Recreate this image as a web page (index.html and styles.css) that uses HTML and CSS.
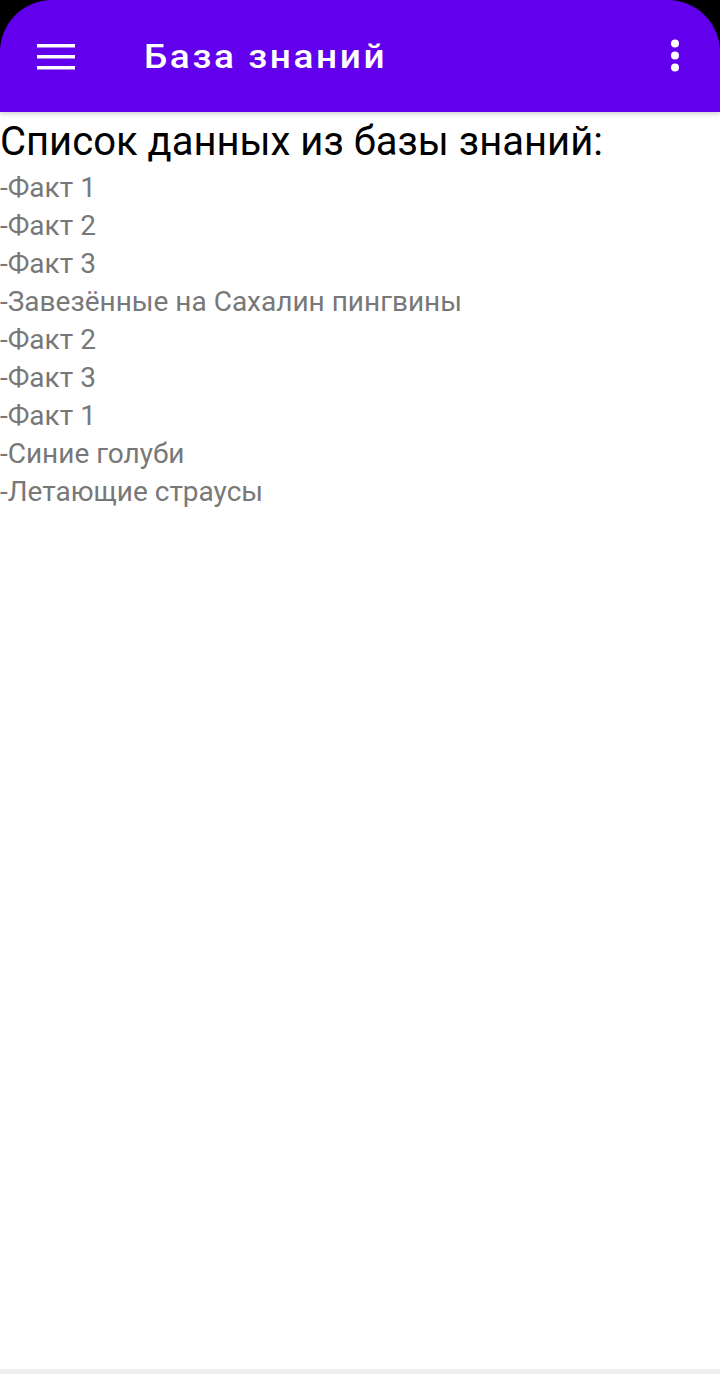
FILE: index.html
```html
<!DOCTYPE html>
<html lang="ru">
<head>
<meta charset="utf-8">
<link rel="stylesheet" href="styles.css">
</head>
<body>
<div class="frame">
  <header class="appbar">
    <svg class="menu" width="38" height="28" viewBox="0 0 38 28"><rect x="0" y="2" width="38" height="3.5" fill="#fff"/><rect x="0" y="13" width="38" height="3.5" fill="#fff"/><rect x="0" y="24" width="38" height="3.5" fill="#fff"/></svg>
    <h1 class="title">База знаний</h1>
    <svg class="more" width="10" height="34" viewBox="0 0 10 34"><circle cx="5" cy="4.5" r="4" fill="#fff"/><circle cx="5" cy="16.5" r="4" fill="#fff"/><circle cx="5" cy="28.5" r="4" fill="#fff"/></svg>
  </header>
</div>
<main class="content">
  <h2 class="heading">Список данных из базы знаний:</h2>
  <ul class="facts">
    <li>-Факт 1</li>
    <li>-Факт 2</li>
    <li>-Факт 3</li>
    <li>-Завезённые на Сахалин пингвины</li>
    <li>-Факт 2</li>
    <li>-Факт 3</li>
    <li>-Факт 1</li>
    <li>-Синие голуби</li>
    <li>-Летающие страусы</li>
  </ul>
</main>
<div class="bottom-line"></div>
</body>
</html>
```
FILE: styles.css
```css
html, body {
  margin: 0;
  padding: 0;
  background: #fff;
  font-family: Roboto, "Noto Sans", sans-serif;
}
body {
  height: 1374px;
  display: flex;
  flex-direction: column;
  overflow: hidden;
}
.frame {
  background: #000;
}
.appbar {
  height: 112px;
  background: #6200ee;
  border-radius: 52px 52px 0 0;
  display: flex;
  align-items: center;
  padding: 0 40px 0 37px;
  box-shadow: 0 2px 5px rgba(0,0,0,0.18);
  position: relative;
  z-index: 1;
}
.menu {
  flex: none;
  margin-top: -1px;
}
.title {
  margin: 2px 0 0 69px;
  flex: 1;
  color: #fff;
  font-weight: 500;
  font-size: 37px;
  line-height: 48px;
  letter-spacing: 2.6px;
  transform: scaleY(0.9);
  transform-origin: left center;
}
.more {
  flex: none;
  margin-top: -1px;
}
.content {
  flex: 1;
  padding-top: 6px;
}
.heading {
  margin: 0;
  font-weight: 400;
  font-size: 40px;
  line-height: 48px;
  color: #000;
}
.facts {
  list-style: none;
  margin: 0;
  padding: 3px 0 0;
}
.facts li {
  font-size: 28px;
  line-height: 38px;
  color: #787878;
}
.bottom-line {
  height: 5px;
  background: #efefef;
  flex: none;
}
```
